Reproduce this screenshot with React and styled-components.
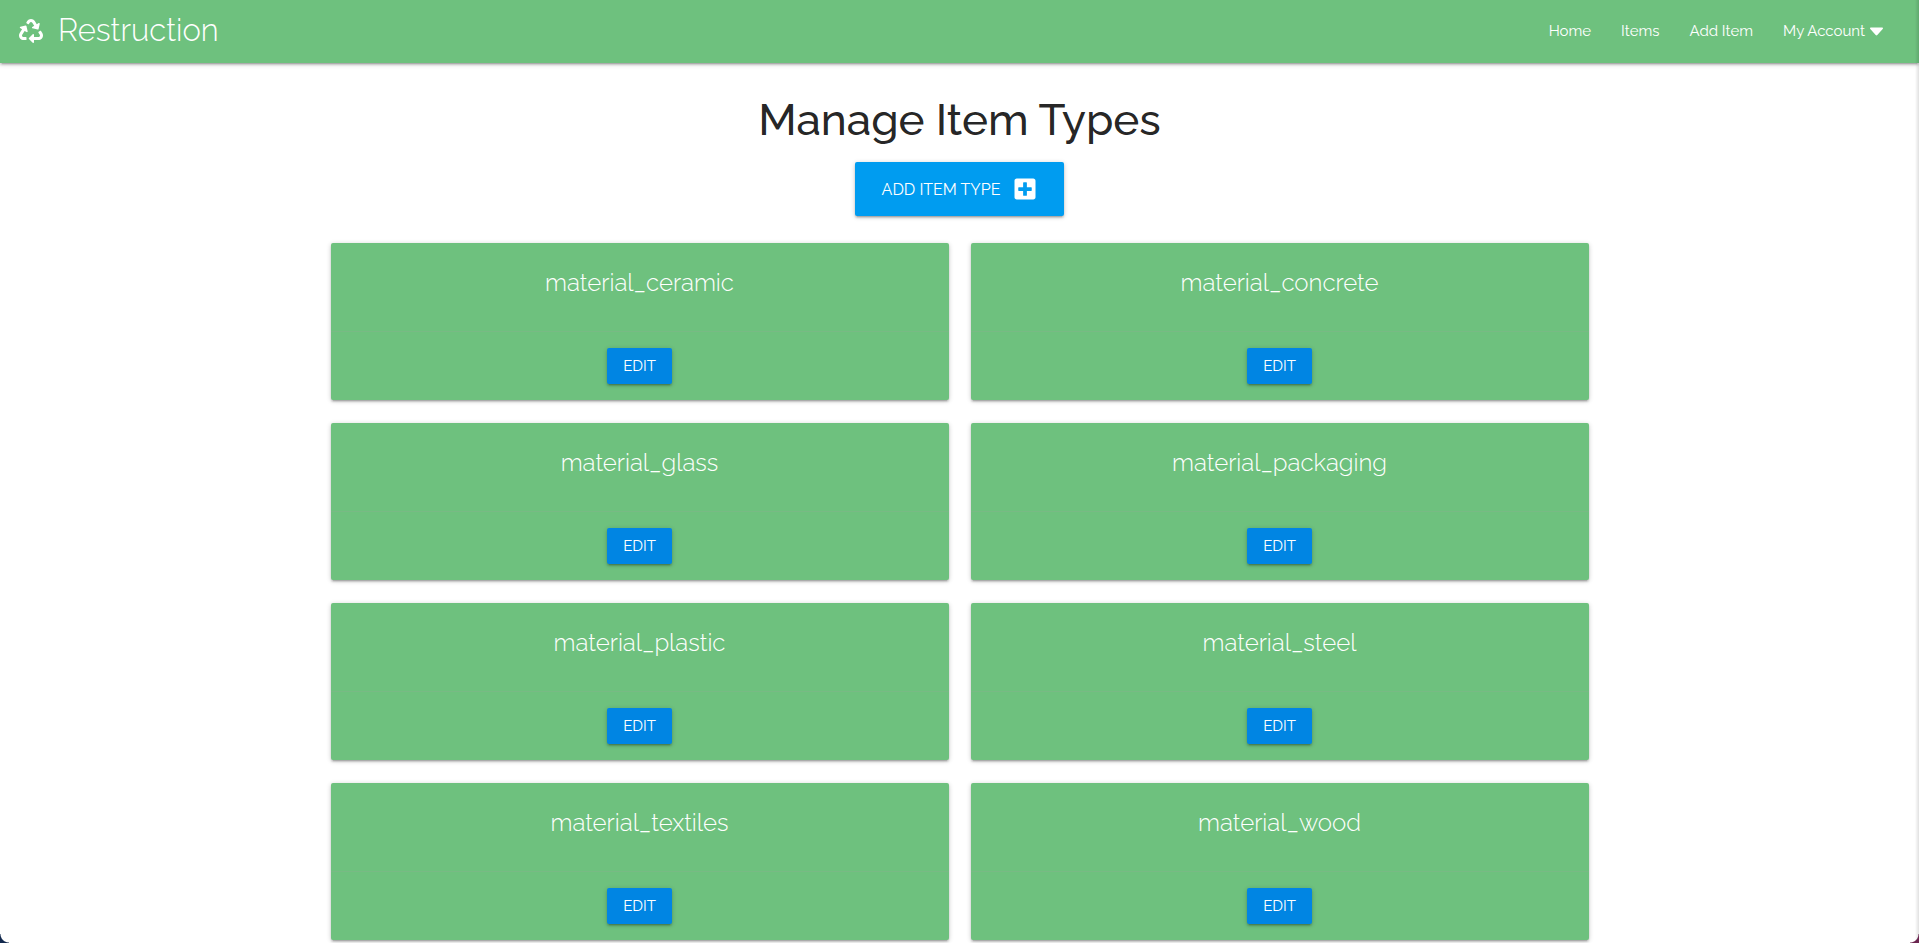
import React from "react";
import styled, { createGlobalStyle } from "styled-components";
import { FaRecycle, FaPlusSquare } from "react-icons/fa";

const GlobalStyle = createGlobalStyle`
  *, *::before, *::after { box-sizing: border-box; }
  body {
    margin: 0;
    background: #fff;
    color: rgba(0, 0, 0, 0.87);
    font-family: Raleway, Lato, "Open Sans", sans-serif;
    font-size: 15px;
    line-height: 1.5;
  }
`;

const shadow = `0 2px 2px 0 rgba(0, 0, 0, 0.14), 0 3px 1px -2px rgba(0, 0, 0, 0.12),
  0 1px 5px 0 rgba(0, 0, 0, 0.2)`;

const Page = styled.div`
  min-height: 100vh;
  overflow: hidden;
`;

const NavBar = styled.nav`
  display: flex;
  align-items: center;
  justify-content: space-between;
  height: 63px;
  padding: 0 21px 0 19px;
  background: #6ec17e;
  color: #fff;
  box-shadow: ${shadow};
`;

const Brand = styled.a`
  display: flex;
  align-items: center;
  gap: 15px;
  color: inherit;
  font-size: 31px;
  font-weight: 300;
  line-height: 61px;
  padding-bottom: 2px;
  text-decoration: none;
`;

const NavList = styled.ul`
  display: flex;
  margin: 0;
  padding: 0;
  list-style: none;
`;

const NavLink = styled.a`
  display: flex;
  align-items: center;
  gap: 5px;
  padding: 0 15px;
  color: inherit;
  line-height: 63px;
  text-decoration: none;
`;

const Main = styled.main`
  display: flex;
  flex-direction: column;
  align-items: center;
  max-width: 1280px;
  margin: 0 auto;
  padding: 30px 11px 22px;
`;

const Title = styled.h1`
  margin: 0;
  font-size: 44px;
  font-weight: 500;
  line-height: 54px;
`;

const Button = styled.button`
  display: inline-flex;
  align-items: center;
  justify-content: center;
  gap: 13px;
  height: ${(p) => (p.$large ? "54px" : "36px")};
  margin-top: ${(p) => (p.$large ? "15px" : "0")};
  padding: ${(p) => (p.$large ? "0 27px" : "0 16px")};
  border: 0;
  border-radius: 2px;
  background: ${(p) => (p.$large ? "#009cf0" : "#0085e3")};
  color: #fff;
  font-family: inherit;
  font-size: ${(p) => (p.$large ? "16px" : "15px")};
  text-transform: uppercase;
  cursor: pointer;
  box-shadow: ${shadow};
`;

const Grid = styled.div`
  display: grid;
  grid-template-columns: 1fr 1fr;
  gap: 23px 22px;
  width: 100%;
  margin-top: 27px;
`;

const Card = styled.article`
  border-radius: 2px;
  background: #6ec17e;
  color: #fff;
  text-align: center;
  box-shadow: ${shadow};
`;

const CardTitle = styled.h2`
  height: 88px;
  margin: 0;
  padding-top: 24px;
  font-size: 24px;
  font-weight: 300;
  line-height: 32px;
`;

const CardAction = styled.div`
  padding: 16px 22px;
  border-top: 1px solid rgba(160, 160, 160, 0.2);
`;

const EdgeShade = styled.div`
  position: fixed;
  inset: 0 0 0 auto;
  width: 4px;
  background: linear-gradient(to right, transparent, rgba(0, 0, 0, 0.12));
`;

const Corner = styled.div`
  position: fixed;
  bottom: 0;
  ${(p) => p.$side}: 0;
  width: 9px;
  height: 9px;
  background: radial-gradient(
    circle at ${(p) => (p.$side === "left" ? "100% 0" : "0 0")},
    transparent 8px,
    ${(p) => p.$color} 9px
  );
`;

const Caret = () => (
  <svg width="13" height="9" viewBox="0 0 13 9" fill="#fff" aria-hidden="true">
    <path d="M1 0.5h11c0.9 0 1.3 1 0.7 1.6L7.3 8a1.1 1.1 0 0 1-1.6 0L0.3 2.1C-0.3 1.5 0.1 0.5 1 0.5z" />
  </svg>
);

const types = [
  "material_ceramic",
  "material_concrete",
  "material_glass",
  "material_packaging",
  "material_plastic",
  "material_steel",
  "material_textiles",
  "material_wood",
];

export default function App() {
  return (
    <Page>
      <GlobalStyle />
      <NavBar>
        <Brand href="#">
          <FaRecycle size={24} aria-hidden="true" />
          Restruction
        </Brand>
        <NavList>
          <li><NavLink href="#">Home</NavLink></li>
          <li><NavLink href="#">Items</NavLink></li>
          <li><NavLink href="#">Add Item</NavLink></li>
          <li>
            <NavLink href="#">
              My Account
              <Caret />
            </NavLink>
          </li>
        </NavList>
      </NavBar>
      <Main>
        <Title>Manage Item Types</Title>
        <Button type="button" $large>
          Add Item Type
          <FaPlusSquare size={24} aria-hidden="true" />
        </Button>
        <Grid>
          {types.map((name) => (
            <Card key={name}>
              <CardTitle>{name}</CardTitle>
              <CardAction>
                <Button type="button">Edit</Button>
              </CardAction>
            </Card>
          ))}
        </Grid>
      </Main>
      <EdgeShade />
      <Corner $side="left" $color="#12294d" />
      <Corner $side="right" $color="#6b2550" />
    </Page>
  );
}
